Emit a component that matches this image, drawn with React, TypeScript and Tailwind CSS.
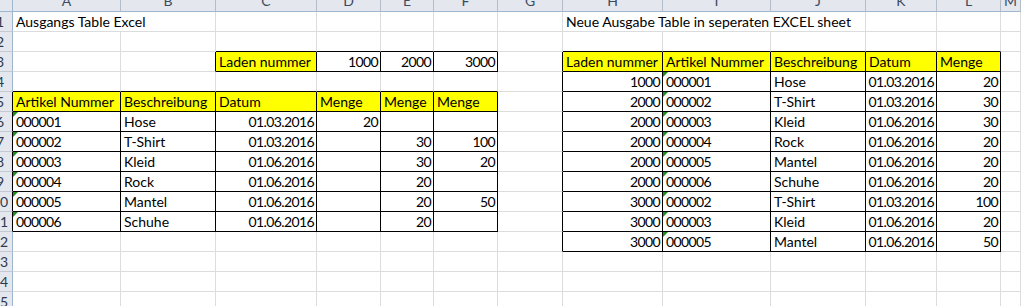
import React from 'react';

type Cell = {
  v: string;
  right?: boolean;
  fill?: boolean;
  box?: boolean;
  tri?: boolean;
  span?: 2 | 3;
};

const COLS = ['A', 'B', 'C', 'D', 'E', 'F', 'G', 'H', 'I', 'J', 'K', 'L', 'M'];
const ROW_COUNT = 15;

const sheet: Record<string, Cell> = {};
const put = (ref: string, v: string, opts: Partial<Cell> = {}) => {
  sheet[ref] = { ...(sheet[ref] ?? { v: '' }), v, ...opts };
};
const frame = (c1: number, r1: number, c2: number, r2: number) => {
  for (let r = r1; r <= r2; r++)
    for (let c = c1; c <= c2; c++) {
      const ref = COLS[c] + r;
      sheet[ref] = { ...(sheet[ref] ?? { v: '' }), box: true };
    }
};

// source table
put('A1', 'Ausgangs Table Excel', { span: 2 });
put('C3', 'Laden nummer', { fill: true });
put('D3', '1000', { right: true });
put('E3', '2000', { right: true });
put('F3', '3000', { right: true });
['Artikel Nummer', 'Beschreibung', 'Datum', 'Menge', 'Menge', 'Menge'].forEach((h, i) =>
  put(COLS[i] + 5, h, { fill: true }),
);
const articles: [string, string, string, string, string, string][] = [
  ['000001', 'Hose', '01.03.2016', '20', '', ''],
  ['000002', 'T-Shirt', '01.03.2016', '', '30', '100'],
  ['000003', 'Kleid', '01.06.2016', '', '30', '20'],
  ['000004', 'Rock', '01.06.2016', '', '20', ''],
  ['000005', 'Mantel', '01.06.2016', '', '20', '50'],
  ['000006', 'Schuhe', '01.06.2016', '', '20', ''],
];
articles.forEach((row, i) => {
  const r = 6 + i;
  put('A' + r, row[0], { tri: true });
  put('B' + r, row[1]);
  put('C' + r, row[2], { right: true });
  put('D' + r, row[3], { right: true });
  put('E' + r, row[4], { right: true });
  put('F' + r, row[5], { right: true });
});
frame(2, 3, 5, 3);
frame(0, 5, 5, 11);

// output table
put('H1', 'Neue Ausgabe Table in seperaten EXCEL sheet', { span: 3 });
['Laden nummer', 'Artikel Nummer', 'Beschreibung', 'Datum', 'Menge'].forEach((h, i) =>
  put(COLS[7 + i] + 3, h, { fill: true }),
);
const output: [string, string, string, string, string][] = [
  ['1000', '000001', 'Hose', '01.03.2016', '20'],
  ['2000', '000002', 'T-Shirt', '01.03.2016', '30'],
  ['2000', '000003', 'Kleid', '01.06.2016', '30'],
  ['2000', '000004', 'Rock', '01.06.2016', '20'],
  ['2000', '000005', 'Mantel', '01.06.2016', '20'],
  ['2000', '000006', 'Schuhe', '01.06.2016', '20'],
  ['3000', '000002', 'T-Shirt', '01.03.2016', '100'],
  ['3000', '000003', 'Kleid', '01.06.2016', '20'],
  ['3000', '000005', 'Mantel', '01.06.2016', '50'],
];
output.forEach((row, i) => {
  const r = 4 + i;
  put('H' + r, row[0], { right: true });
  put('I' + r, row[1], { tri: true });
  put('J' + r, row[2]);
  put('K' + r, row[3], { right: true });
  put('L' + r, row[4], { right: true });
});
frame(7, 3, 11, 12);

const isBox = (c: number, r: number) => c >= 0 && c < COLS.length && !!sheet[COLS[c] + r]?.box;
// digits in Lato run wider than the sheet's font, so numbers get tightened
const isNumeric = (v?: string) => !!v && /^[\d.]+$/.test(v);

const covered = new Set<string>();
Object.entries(sheet).forEach(([ref, cell]) => {
  if (!cell.span) return;
  const c = COLS.indexOf(ref[0]);
  const r = ref.slice(1);
  for (let k = 1; k < cell.span; k++) covered.add(COLS[c + k] + r);
});

const font = { fontFamily: 'Lato, "Open Sans", sans-serif' };

export default function App() {
  const rows = Array.from({ length: ROW_COUNT }, (_, i) => i + 1);

  return (
    <div
      className="h-[306px] w-[1022px] overflow-hidden bg-white text-[14px] text-black"
      style={font}
    >
      <div className="grid grid-cols-[13px_108px_95px_101px_64px_53px_64px_65px_100px_108px_95px_71px_64px_20px] grid-rows-[12px_repeat(15,20px)]">
        {/* corner + column letters */}
        <div className="border-r border-b border-r-[#9eb6ce] border-b-[#9eb6ce] bg-[#e4e8ee]" />
        {COLS.map((col) => (
          <div
            key={col}
            className="overflow-hidden border-r border-b border-r-[#b4bcc8] border-b-[#9eb6ce] bg-[#e4e8ee] text-center"
          >
            <div className="-mt-[6px] leading-[14px] text-[#3c4b60]">{col}</div>
          </div>
        ))}

        {rows.map((r) => (
          <React.Fragment key={r}>
            <div
              className={`relative flex items-end overflow-hidden border-r border-b border-b-[#c3c9d2] bg-[#e4e8ee] ${
                isBox(0, r) ? 'border-r-black' : 'border-r-[#9eb6ce]'
              }`}
            >
              <div className="-ml-[13px] w-[26px] shrink-0 text-center leading-[18px] text-[#2e3a4c]">
                {r}
              </div>
            </div>
            {COLS.map((col, c) => {
              const ref = col + r;
              if (covered.has(ref)) return null;
              const cell = sheet[ref];
              const last = cell?.span ? c + cell.span - 1 : c;
              const rightDark = isBox(last, r) || isBox(last + 1, r);
              const bottomDark = isBox(c, r) || isBox(c, r + 1);
              return (
                <div
                  key={ref}
                  className={`relative flex items-end overflow-hidden whitespace-nowrap border-r border-b leading-[18px] ${
                    rightDark ? 'border-r-black' : 'border-r-[#dadcdd]'
                  } ${bottomDark ? 'border-b-black' : 'border-b-[#dadcdd]'} ${
                    cell?.fill ? 'bg-[#ffff00]' : ''
                  } ${cell?.right ? 'justify-end pr-[2px]' : 'justify-start px-[3px]'} ${
                    isNumeric(cell?.v) ? 'tracking-[-0.6px]' : ''
                  } ${cell?.span === 2 ? 'col-span-2' : cell?.span === 3 ? 'col-span-3' : ''}`}
                >
                  {cell?.tri && (
                    <span className="absolute top-0 left-0 h-0 w-0 border-t-[5px] border-r-[5px] border-t-[#1f8a1f] border-r-transparent" />
                  )}
                  {cell?.v}
                </div>
              );
            })}
          </React.Fragment>
        ))}
      </div>
    </div>
  );
}
